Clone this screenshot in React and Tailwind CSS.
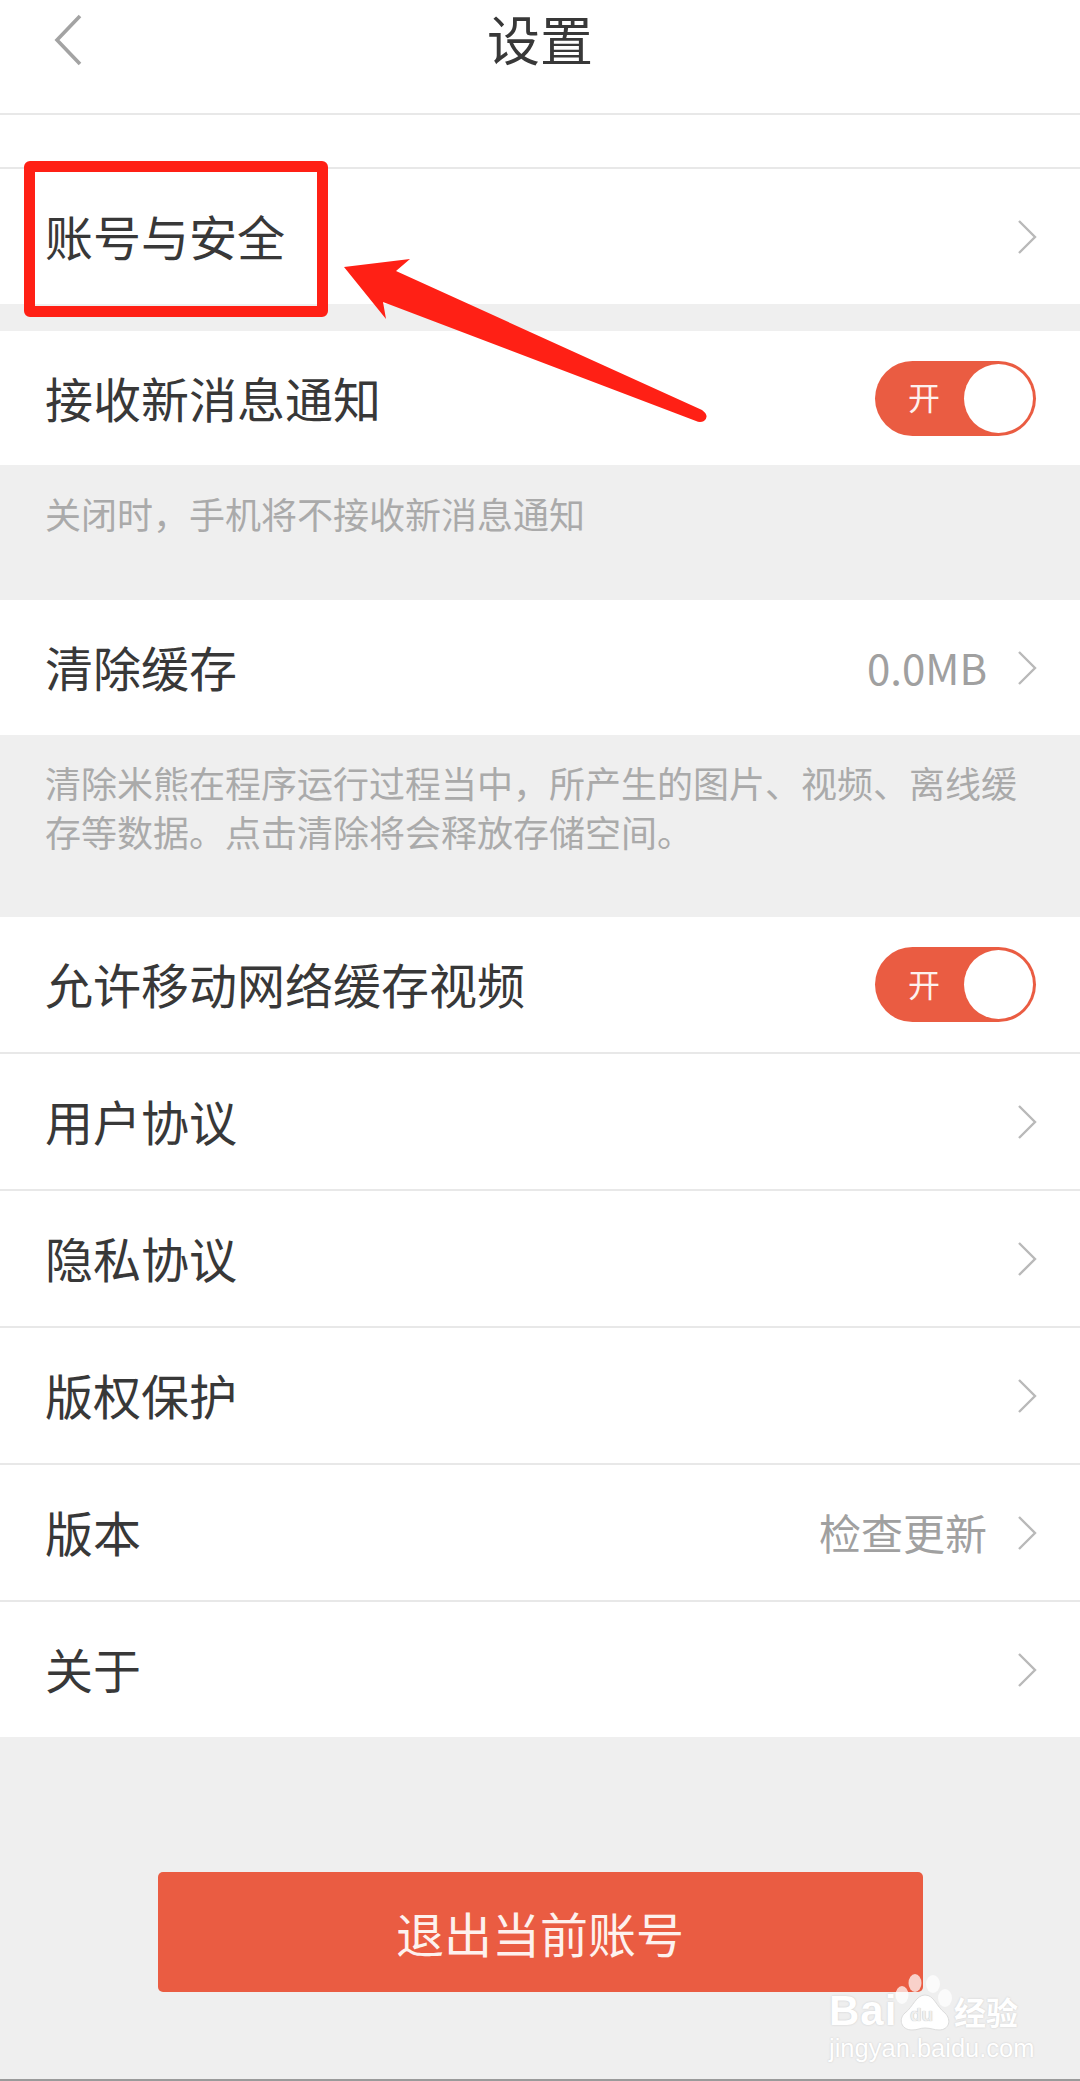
const font = { fontFamily: '"Noto Sans CJK SC", "Noto Sans", sans-serif' };

function Chevron() {
  return (
    <svg width="22" height="36" viewBox="0 0 22 36" className="block shrink-0" fill="none">
      <path d="M3 2 L19 18 L3 34" stroke="#b9b9b9" strokeWidth="2.4" />
    </svg>
  );
}

function Toggle() {
  return (
    <div className="relative mr-[2px] flex h-[75px] w-[161px] items-center rounded-full bg-[#ea5c42]">
      <span className="mb-[4px] ml-[33px] text-[32px] leading-none text-[#fdf1ee]">开</span>
      <span className="absolute right-[3px] top-[3px] h-[69px] w-[69px] rounded-full bg-white" />
    </div>
  );
}

function Row({ label, value, toggle, h = "h-[137px]", line = true }) {
  return (
    <div className={`flex ${h} items-center justify-between bg-white pl-[45px] pr-[42px] ${line ? "border-b-2 border-[#e8e8e8]" : ""}`}>
      <span className="mb-[3px] text-[48px] leading-none text-[#383838]">{label}</span>
      {toggle ? (
        <Toggle />
      ) : (
        <div className="flex items-center gap-[29px]">
          {value ? <span className="mb-[2px] text-[42px] leading-none text-[#a0a0a0]">{value}</span> : null}
          <Chevron />
        </div>
      )}
    </div>
  );
}

function Watermark() {
  return (
    <div className="absolute left-[826px] top-[1970px] h-[95px] w-[200px] text-white [text-shadow:0_0_2px_#c8c8c8]">
      <span className="absolute left-[3px] top-[17px] text-[42px] font-bold leading-[48px] tracking-[1px]" style={{ fontFamily: '"Liberation Sans", sans-serif' }}>Bai</span>
      <svg className="absolute left-[66px] top-[4px]" width="64" height="60" viewBox="0 0 64 60">
        <g fill="#ffffff" fillOpacity="0.72">
          <ellipse cx="10" cy="21" rx="6.5" ry="9" />
          <ellipse cx="23" cy="9" rx="6.5" ry="9" />
          <ellipse cx="41" cy="10" rx="7" ry="9" />
          <ellipse cx="53" cy="24" rx="7" ry="9" />
        </g>
        <path d="M33 21 C24 21 21 33 13 39 C6 45 9 56 20 56 C26 56 28 54 33 54 C39 54 42 56 47 56 C57 56 60 46 53 39 C44 32 42 21 33 21 Z" fill="#ffffff" stroke="#dcdcdc" strokeWidth="1" />
      </svg>
      <span className="absolute left-[84px] top-[33px] text-[19px] font-bold leading-[24px] text-[#efefef] [text-shadow:0_0_1px_#aaaaaa]" style={{ fontFamily: '"Liberation Sans", sans-serif' }}>du</span>
      <span className="absolute left-[128px] top-[23px] text-[32px] font-bold leading-[36px]">经验</span>
      <span className="absolute left-[3px] top-[62px] text-[25.5px] leading-[32px]" style={{ fontFamily: '"Liberation Sans", sans-serif' }}>jingyan.baidu.com</span>
    </div>
  );
}

export default function App() {
  return (
    <div className="relative flex h-[2081px] w-[1080px] flex-col overflow-hidden bg-[#efefef]" style={font}>
      <header className="relative flex h-[115px] items-center justify-center border-b-2 border-[#e8e8e8] bg-white pb-[36px]">
        <svg className="absolute left-[52px] top-[13px]" width="32" height="54" viewBox="0 0 32 54" fill="none">
          <path d="M28 3 L5 27 L28 51" stroke="#a3a3a3" strokeWidth="3.6" />
        </svg>
        <h1 className="text-[53px] font-normal leading-none text-[#383838]">设置</h1>
      </header>
      <div className="h-[54px] border-b-2 border-[#e8e8e8] bg-white" />
      <Row label="账号与安全" h="h-[135px]" line={false} />
      <div className="h-[27px]" />
      <Row label="接收新消息通知" toggle h="h-[134px]" line={false} />
      <p className="h-[135px] pl-[45px] pt-[24px] text-[36px] leading-[48px] text-[#aaaaaa]">关闭时，手机将不接收新消息通知</p>
      <Row label="清除缓存" value="0.0MB" h="h-[135px]" line={false} />
      <p className="h-[182px] pl-[45px] pr-[40px] pt-[23px] text-[36px] leading-[49px] text-[#aaaaaa]">清除米熊在程序运行过程当中，所产生的图片、视频、离线缓存等数据。点击清除将会释放存储空间。</p>
      <Row label="允许移动网络缓存视频" toggle />
      <Row label="用户协议" />
      <Row label="隐私协议" />
      <Row label="版权保护" />
      <Row label="版本" value="检查更新" />
      <Row label="关于" h="h-[135px]" line={false} />
      <button className="mx-auto mt-[135px] flex h-[120px] w-[765px] items-center justify-center rounded-[5px] bg-[#ea5c42] text-[48px] leading-none text-[#fdf1ee]">退出当前账号</button>
      <div className="mt-auto h-[2px] bg-[#9a9a9a]" />

      <div className="absolute left-[24px] top-[161px] h-[156px] w-[304px] rounded-[6px] border-[11px] border-[#ff2015]" />
      <svg className="absolute left-[340px] top-[255px]" width="370" height="170" viewBox="340 255 370 170">
        <path d="M344 267 L410 259 L396 271 L702 410 Q710 416 704 421 Q700 423 696 421 L383 302 L386 319 Z" fill="#ff2015" />
      </svg>
      <Watermark />
    </div>
  );
}
